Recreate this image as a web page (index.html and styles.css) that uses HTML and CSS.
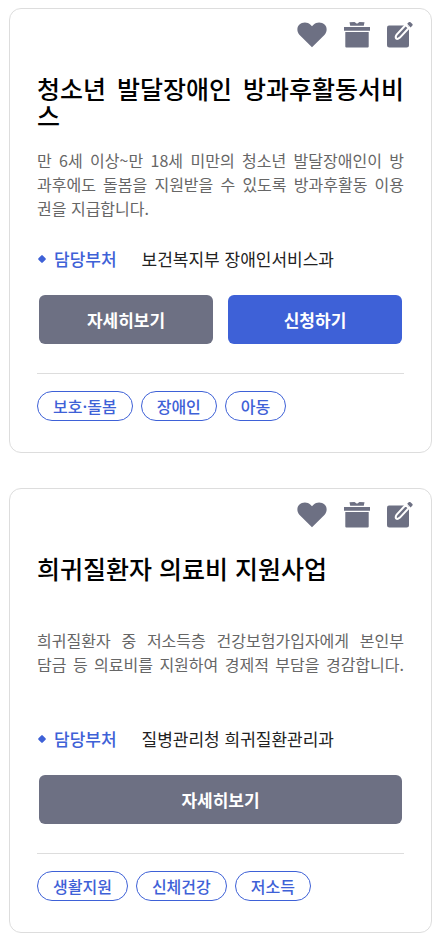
FILE: index.html
```html
<!DOCTYPE html>
<html lang="ko">
<head>
  <meta charset="UTF-8">
  <meta name="viewport" content="width=device-width, initial-scale=1.0">
  <title>복지서비스</title>
  <link rel="stylesheet" href="styles.css">
</head>
<body>
  <!-- shared icons -->
  <svg class="sprite" aria-hidden="true">
    <symbol id="heart" viewBox="0 0 30 26">
      <path d="M15 25.2 2.600 13C-.4 9.800-.2 5.200 2.200 2.800 5.400-.2 10.600-.1 13.500 2.800L15 4.300l1.500-1.500c2.900-2.900 8.100-3 11.300 0 2.400 2.400 2.600 7-.4 10.200z"/>
    </symbol>
    <symbol id="gift" viewBox="0 0 26 26">
      <path d="M5.500.300 10.500.100 13 1.800 15.500.100 20.500.300 19.800 3.700H6.200zM0 5h26v3.800H0zM1.300 10h23.400v14.500q0 1-1 1H2.300q-1 0-1-1z"/>
    </symbol>
    <symbol id="edit" viewBox="0 0 26 26">
      <path d="M2 3.500h18q2 0 2 2V23q0 2.500-2.500 2.500H2.500Q0 25.500 0 23V5.500q0-2 2-2z"/>
      <path class="pen-line" d="M9.200 16.600q-1.200-1.600.5-4L18.600 3l3.200 3-8.900 9.600q-2.400 2.100-3.700 1z"/>
      <path d="M20.200 1.800 22 0q.8-.4 1.500.3l1.900 1.800q.6.800 0 1.500l-1.800 1.900z"/>
    </symbol>
  </svg>

  <main class="list">
    <article class="card">
      <div class="card-tools">
        <button type="button" class="tool" aria-label="관심"><svg class="icon icon-heart"><use href="#heart"/></svg></button>
        <button type="button" class="tool" aria-label="선물"><svg class="icon"><use href="#gift"/></svg></button>
        <button type="button" class="tool" aria-label="작성"><svg class="icon"><use href="#edit"/></svg></button>
      </div>
      <div class="card-body">
        <h2 class="title">청소년 발달장애인 방과후활동서비스</h2>
        <p class="desc">만 6세 이상~만 18세 미만의 청소년 발달장애인이 방<br>과후에도 돌봄을 지원받을 수 있도록 방과후활동 이용<br><span class="desc-end">권을 지급합니다.</span></p>
        <dl class="dept">
          <dt>담당부처</dt>
          <dd>보건복지부 장애인서비스과</dd>
        </dl>
        <div class="buttons">
          <button type="button" class="btn">자세히보기</button>
          <button type="button" class="btn btn-apply">신청하기</button>
        </div>
        <ul class="tags">
          <li>보호·돌봄</li>
          <li>장애인</li>
          <li>아동</li>
        </ul>
      </div>
    </article>

    <article class="card">
      <div class="card-tools">
        <button type="button" class="tool" aria-label="관심"><svg class="icon icon-heart"><use href="#heart"/></svg></button>
        <button type="button" class="tool" aria-label="선물"><svg class="icon"><use href="#gift"/></svg></button>
        <button type="button" class="tool" aria-label="작성"><svg class="icon"><use href="#edit"/></svg></button>
      </div>
      <div class="card-body">
        <h2 class="title">희귀질환자 의료비 지원사업</h2>
        <p class="desc">희귀질환자 중 저소득층 건강보험가입자에게 본인부<br>담금 등 의료비를 지원하여 경제적 부담을 경감합니다.</p>
        <dl class="dept">
          <dt>담당부처</dt>
          <dd>질병관리청 희귀질환관리과</dd>
        </dl>
        <div class="buttons">
          <button type="button" class="btn">자세히보기</button>
        </div>
        <ul class="tags">
          <li>생활지원</li>
          <li>신체건강</li>
          <li>저소득</li>
        </ul>
      </div>
    </article>
  </main>
</body>
</html>
```
FILE: styles.css
```css
* {
  box-sizing: border-box;
}

body {
  margin: 8px 13px 8px 9px;
  background: #fff;
  color: #222;
  font-family: "Noto Sans CJK KR", sans-serif;
  font-size: 17px;
  line-height: 24px;
}

h2, p, dl, dd, ul {
  margin: 0;
  padding: 0;
}

button {
  border: 0;
  padding: 0;
  font-family: inherit;
  cursor: pointer;
}

.sprite {
  position: absolute;
  width: 0;
  height: 0;
}

.list {
  display: flex;
  flex-direction: column;
  gap: 35px;
}

.card {
  border: 1px solid #ddd;
  border-radius: 12px;
  background: #fff;
}

/* icons on the top right */
.card-tools {
  display: flex;
  justify-content: flex-end;
  gap: 17px;
  padding: 13px 18px 0;
}

.tool {
  display: flex;
  background: none;
}

.icon {
  width: 26px;
  height: 26px;
  fill: #6d7083;
}

.icon-heart {
  width: 30px;
}

.pen-line {
  fill: #6d7083;
  stroke: #fff;
  stroke-width: 2;
}

.card-body {
  padding: 27px 27px 31px;
}

.title {
  min-height: 54px;
  color: #000;
  font-size: 25px;
  font-weight: 500;
  line-height: 27px;
  text-align: justify;
  word-break: break-all;
}

.desc {
  min-height: 72px;
  margin-top: 19px;
  color: #666;
  font-size: 16px;
  text-align: justify;
  text-align-last: justify;
  word-break: break-all;
}

/* short closing line, not stretched */
.desc-end {
  display: inline-block;
  text-align-last: left;
}

.dept {
  display: flex;
  align-items: center;
  margin-top: 27px;
}

.dept dt {
  display: flex;
  align-items: center;
  gap: 9px;
  margin-right: 25px;
  color: #3e61d7;
  font-weight: 500;
}

.dept dt::before {
  content: "";
  width: 6px;
  height: 6px;
  margin-left: 2px;
  border-radius: 1px;
  background: #3e61d7;
  transform: rotate(45deg);
}

.buttons {
  display: flex;
  gap: 15px;
  margin-top: 24px;
  padding: 0 2px;
}

.btn {
  flex: 1;
  height: 49px;
  border-radius: 6px;
  background: #6d7083;
  color: #fff;
  font-size: 17px;
  font-weight: 700;
}

.btn-apply {
  background: #3e61d7;
}

.tags {
  display: flex;
  flex-wrap: wrap;
  gap: 8px;
  margin-top: 29px;
  padding-top: 17px;
  border-top: 1px solid #ddd;
  list-style: none;
}

.tags li {
  padding: 0 15px;
  border: 1px solid #3e61d7;
  border-radius: 15px;
  color: #3e61d7;
  font-size: 16px;
  font-weight: 500;
  line-height: 28px;
}
```
